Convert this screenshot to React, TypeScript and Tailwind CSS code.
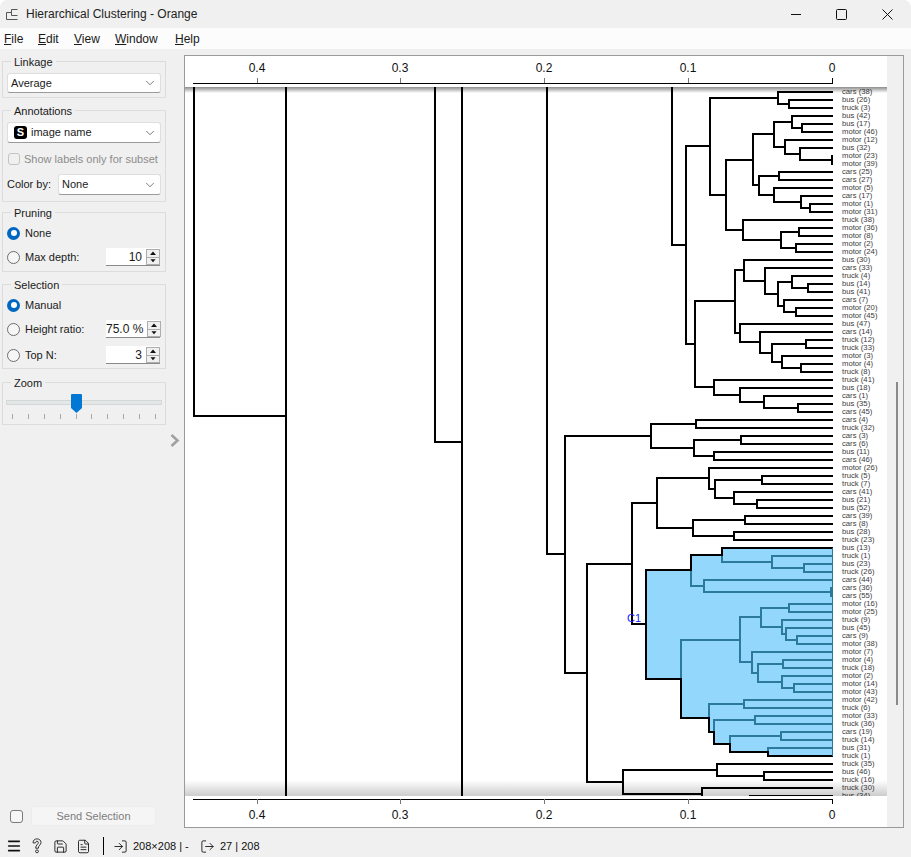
import type { ReactNode } from "react";
import { ChevronDown, LogIn, LogOut, Menu, Save, FileText } from "lucide-react";

type Tree = string | { x: number; a: Tree; b: Tree };
type Laid = { x: number; y: number; a?: Laid; b?: Laid };

const n = (x: number, a: Tree, b: Tree): Tree => ({ x, a, b });

const RIGHT = 833;

const upperTree = n(
  686,
  n(
    710,
    n(778, "cars (38)", n(789, "bus (26)", "truck (3)")),
    n(
      726,
      n(
        753,
        n(
          774,
          n(792, "bus (42)", n(802, "bus (17)", "motor (46)")),
          n(785, "motor (12)", n(800, "bus (32)", n(832, "motor (23)", "motor (39)")))
        ),
        n(
          759,
          n(779, "cars (25)", "cars (27)"),
          n(774, "motor (5)", n(801, "cars (17)", n(810, "motor (1)", "motor (31)")))
        )
      ),
      n(743, "truck (38)", n(781, n(799, "motor (36)", "motor (8)"), n(796, "motor (2)", "motor (24)")))
    )
  ),
  n(
    695,
    n(
      735,
      n(
        744,
        "bus (30)",
        n(
          765,
          "cars (33)",
          n(
            778,
            n(792, "truck (4)", n(808, "bus (14)", "bus (41)")),
            n(784, "cars (7)", n(796, "motor (20)", "motor (45)"))
          )
        )
      ),
      n(
        740,
        "bus (47)",
        n(
          760,
          "cars (14)",
          n(772, n(806, "truck (12)", "truck (33)"), n(782, "motor (3)", n(801, "motor (4)", "truck (8)")))
        )
      )
    ),
    n(714, "truck (41)", n(740, "bus (18)", n(764, "cars (1)", n(798, "bus (35)", "cars (45)"))))
  )
);

const lowerFirst = n(
  651,
  n(696, "cars (4)", "truck (32)"),
  n(694, n(741, "cars (3)", "cars (6)"), n(714, "bus (11)", "cars (46)"))
);

const middle = n(
  657,
  n(
    709,
    "motor (26)",
    n(715, n(762, "truck (5)", "truck (7)"), n(734, "cars (41)", n(757, "bus (21)", "bus (52)")))
  ),
  n(693, n(745, "cars (39)", "cars (8)"), n(734, "bus (28)", "truck (23)"))
);

const selected = n(
  646,
  n(
    691,
    n(722, "bus (13)", n(772, "truck (1)", n(804, "bus (23)", "truck (26)"))),
    n(704, "cars (44)", n(831, "cars (36)", "cars (55)"))
  ),
  n(
    681,
    n(
      740,
      n(
        761,
        n(789, "motor (16)", "motor (25)"),
        n(782, "truck (9)", n(786, "bus (45)", n(797, "cars (9)", "motor (38)")))
      ),
      n(
        752,
        "motor (7)",
        n(758, n(783, "motor (4)", "truck (18)"), n(782, "motor (2)", n(794, "motor (14)", "motor (43)")))
      )
    ),
    n(
      709,
      n(744, "motor (42)", "truck (6)"),
      n(714, n(755, "motor (33)", "truck (36)"), n(730, n(781, "cars (19)", "truck (14)"), n(768, "bus (31)", "truck (1)")))
    )
  )
);

const bottom = n(
  623,
  n(717, "truck (35)", n(764, "bus (46)", "truck (16)")),
  n(702, "truck (30)", n(750, "bus (34)", ""))
);

const labels: string[] = [];
let leafIndex = 0;

function lay(t: Tree): Laid {
  if (typeof t === "string") {
    if (t) labels.push(t);
    return { x: RIGHT, y: 92 + 8 * leafIndex++ };
  }
  const a = lay(t.a);
  const b = lay(t.b);
  return { x: t.x, y: (a.y + b.y) / 2, a, b };
}

// snap to whole pixels so that every 2px line stays 2px wide
const snap = (y: number) => Math.floor(y);

function links(l: Laid): string {
  if (!l.a || !l.b) return "";
  return `M${l.a.x} ${snap(l.a.y)}H${l.x}V${snap(l.b.y)}H${l.b.x}` + links(l.a) + links(l.b);
}

function edge(l: Laid, side: "a" | "b"): [number, number][] {
  const c = l[side];
  if (!c) return [[l.x, snap(l.y)]];
  return [[l.x, snap(l.y)], [l.x, snap(c.y)], ...edge(c, side)];
}

const upperLaid = lay(upperTree);
const firstLaid = lay(lowerFirst);
const middleLaid = lay(middle);
const selectedLaid = lay(selected);
const bottomLaid = lay(bottom);

const hullPoints = [...edge(selectedLaid, "a"), ...edge(selectedLaid, "b").reverse()];
const hullD = "M" + hullPoints.map((p) => p.join(" ")).join("L");

const y632 = (middleLaid.y + selectedLaid.y) / 2;
const y587 = (y632 + bottomLaid.y) / 2;
const y565 = (firstLaid.y + y587) / 2;

const blackLines =
  links(upperLaid) +
  links(firstLaid) +
  links(middleLaid) +
  links(bottomLaid) +
  `M${middleLaid.x} ${snap(middleLaid.y)}H632V${snap(selectedLaid.y)}H646` +
  `M632 ${snap(y632)}H587V${snap(bottomLaid.y)}H623` +
  `M587 ${snap(y587)}H565V${snap(firstLaid.y)}H651` +
  `M565 ${snap(y565)}H547V80` +
  `M435 80V442H462M462 80V830M286 80V830M194 80V416H286` +
  `M672 80V${snap(upperLaid.y)}H686`;

const ticks = [
  { x: 257, label: "0.4" },
  { x: 400, label: "0.3" },
  { x: 544, label: "0.2" },
  { x: 688, label: "0.1" },
  { x: 832, label: "0" },
];

const Axis = ({ flip }: { flip?: boolean }) => (
  <svg
    viewBox={flip ? "185 796 702 31" : "185 56 702 31"}
    className="block h-[31px] w-[702px]"
  >
    <path
      d={flip ? "M193 799.5H833" : "M193 83.5H833"}
      stroke="#000"
      strokeWidth="1.4"
      fill="none"
      shapeRendering="crispEdges"
    />
    {ticks.map((t) => (
      <g key={t.x}>
        <line
          x1={t.x + 0.5}
          x2={t.x + 0.5}
          y1={flip ? 799 : 78}
          y2={flip ? 804 : 83}
          stroke={t.label === "0" ? "#000" : "#777"}
          strokeWidth="1"
        />
        <text x={t.x} y={flip ? 819 : 72} textAnchor="middle" fontSize="12" fill="#111">
          {t.label}
        </text>
      </g>
    ))}
  </svg>
);

const Group = ({ title, className, children }: { title: string; className: string; children: ReactNode }) => (
  <div className={`mx-[2px] border border-[#dcdcdc] ${className}`}>
    <span className="-mt-[7px] ml-[8px] block h-[14px] w-fit bg-[#f0f0f0] px-[3px] leading-[14px]">{title}</span>
    {children}
  </div>
);

const Combo = ({ className, children }: { className: string; children: ReactNode }) => (
  <div
    className={`flex items-center justify-between rounded-[3px] border border-[#dedede] border-b-[#9a9a9a] bg-white pl-[3px] pr-[3px] ${className}`}
  >
    <span className="flex items-center gap-[4px]">{children}</span>
    <ChevronDown size={14} strokeWidth={1.2} className="text-[#444]" />
  </div>
);

const Radio = ({ checked, label, className }: { checked?: boolean; label: string; className?: string }) => (
  <div className={`flex items-center gap-[5px] ${className ?? ""}`}>
    {checked ? (
      <span className="flex h-[13px] w-[13px] items-center justify-center rounded-full bg-[#0067c0]">
        <span className="h-[6px] w-[6px] rounded-full bg-white" />
      </span>
    ) : (
      <span className="h-[13px] w-[13px] rounded-full border border-[#6e6e6e] bg-[#f6f6f6]" />
    )}
    <span>{label}</span>
  </div>
);

const Spin = ({ value }: { value: string }) => (
  <div className="ml-auto mr-[5px] flex h-[18px] w-[54px] items-center border-b border-b-[#8a8a8a] bg-white">
    <span className="flex-1 whitespace-nowrap pr-[4px] text-right text-[12px]">{value}</span>
    <div className="flex h-[16px] w-[14px] flex-col border border-[#adadad] bg-[#f0f0f0]">
      <svg viewBox="0 0 12 7" className="h-[7px] w-[12px]">
        <path d="M6 1.5 9 5H3Z" fill="#111" />
      </svg>
      <span className="h-px bg-[#adadad]" />
      <svg viewBox="0 0 12 7" className="h-[6px] w-[12px]">
        <path d="M3 1.5H9L6 5Z" fill="#111" />
      </svg>
    </div>
  </div>
);

const Slider = () => (
  <div className="relative mx-[4px] mt-[4px] h-[26px]">
    <div className="h-[7px]" />
    <div className="h-[3px] bg-[#e2e7e7] outline outline-1 outline-[#d6d6d6]" />
    <svg viewBox="0 0 11 19" className="absolute left-[64px] top-0 h-[19px] w-[11px]">
      <path d="M1 0H10a1 1 0 0 1 1 1V14L5.5 19 0 14V1a1 1 0 0 1 1-1Z" fill="#0078d4" />
    </svg>
    <div className="mt-[10px] flex h-[5px] justify-between px-[5px]">
      {[0, 1, 2, 3, 4, 5, 6, 7, 8, 9].map((i) => (
        <span key={i} className="w-px bg-[#a8a8a8]" />
      ))}
    </div>
  </div>
);

const MenuItem = ({ first, rest, className }: { first: string; rest: string; className: string }) => (
  <span className={className}>
    <span className="underline">{first}</span>
    {rest}
  </span>
);

export default function App() {
  return (
    <div className="flex h-[857px] w-[911px] flex-col overflow-hidden rounded-t-[8px] bg-[#f0f0f0] font-['Liberation_Sans',sans-serif] text-[11px] text-[#1a1a1a]">
      {/* title bar */}
      <div className="flex h-[28px] items-center bg-[#f0f0f0] text-[12px]">
        <svg viewBox="0 0 12 11" fill="none" stroke="#555" strokeWidth="1" className="ml-[6px] h-[11px] w-[12px]">
          <path d="M11.5 10.5H.5V3.5H5.5V.5H11.5M5.5 3.5V6.5H11.5" />
        </svg>
        <span className="ml-[8px] w-[172px] whitespace-nowrap text-[#222]">Hierarchical Clustering - Orange</span>
        <div className="ml-[593px] flex items-center gap-[35px]">
          <svg viewBox="0 0 10 10" fill="none" stroke="#111" className="h-[10px] w-[10px]">
            <path d="M0 5.5H10" />
          </svg>
          <svg viewBox="0 0 11 11" fill="none" stroke="#111" className="h-[11px] w-[11px]">
            <rect x=".5" y=".5" width="10" height="10" rx="1" />
          </svg>
          <svg viewBox="0 0 11 11" fill="none" stroke="#111" className="h-[11px] w-[11px]">
            <path d="M.5.5 10.5 10.5M10.5.5.5 10.5" />
          </svg>
        </div>
      </div>
      {/* menu bar */}
      <div className="flex h-[21px] items-center bg-[#fcfcfc] pl-[4px] text-[12px]">
        <MenuItem first="F" rest="ile" className="w-[34px]" />
        <MenuItem first="E" rest="dit" className="w-[36px]" />
        <MenuItem first="V" rest="iew" className="w-[41px]" />
        <MenuItem first="W" rest="indow" className="w-[60px]" />
        <MenuItem first="H" rest="elp" className="" />
      </div>
      {/* body */}
      <div className="flex min-h-0 flex-1">
        <div className="flex w-[168px] flex-col">
          <Group title="Linkage" className="mt-[12px] pb-[4px]">
            <Combo className="mx-[4px] mt-[4px] h-[20px]">Average</Combo>
          </Group>
          <Group title="Annotations" className="mt-[12px] pb-[6px]">
            <Combo className="mx-[4px] mt-[4px] h-[21px]">
              <span className="ml-[3px] flex h-[13px] w-[13px] items-center justify-center rounded-[3px] bg-black text-[11px] font-bold text-white">
                S
              </span>
              image name
            </Combo>
            <div className="mt-[8px] flex h-[16px] items-center gap-[4px] whitespace-nowrap pl-[5px] text-[#8c8c8c]">
              <span className="h-[12px] w-[12px] rounded-[3px] border border-[#c4c4c4]" />
              Show labels only for subset
            </div>
            <div className="mt-[7px] flex h-[21px] items-center pl-[4px]">
              <span className="w-[51px]">Color by:</span>
              <Combo className="mr-[4px] h-[21px] flex-1">None</Combo>
            </div>
          </Group>
          <Group title="Pruning" className="mt-[10px] pb-[4px]">
            <Radio checked label="None" className="ml-[4px] mt-[3px] h-[20px]" />
            <div className="mt-[4px] flex h-[20px] items-center">
              <Radio label="Max depth:" className="ml-[4px]" />
              <Spin value="10" />
            </div>
          </Group>
          <Group title="Selection" className="mt-[12px] pb-[3px]">
            <Radio checked label="Manual" className="ml-[4px] mt-[3px] h-[20px]" />
            <div className="mt-[4px] flex h-[20px] items-center">
              <Radio label="Height ratio:" className="ml-[4px]" />
              <Spin value="75.0 %" />
            </div>
            <div className="mt-[6px] flex h-[20px] items-center">
              <Radio label="Top N:" className="ml-[4px]" />
              <Spin value="3" />
            </div>
          </Group>
          <Group title="Zoom" className="mt-[13px] pb-[4px]">
            <Slider />
          </Group>
          <div className="mb-[9px] mt-auto flex h-[20px] items-center pl-[10px]">
            <span className="h-[13px] w-[13px] rounded-[3px] border border-[#7a7a7a] bg-[#f6f6f6]" />
            <button className="ml-[8px] h-[20px] w-[125px] rounded-[3px] border border-[#ececec] bg-[#f5f5f5] text-[#7d7d7d]">
              Send Selection
            </button>
          </div>
        </div>
        <div className="w-[16px] pl-[2px] pt-[385px]">
          <svg viewBox="0 0 10 13" className="h-[13px] w-[10px]" fill="none" stroke="#a0a0a0" strokeWidth="2.6">
            <path d="M1.5 1 7.5 6.5 1.5 12" />
          </svg>
        </div>
        {/* plot frame */}
        <div className="mb-[7px] mt-[6px] flex w-[720px] border border-[#9a9a9a] bg-[#f0f0f0]">
          <div className="flex w-[702px] flex-col bg-white">
            <Axis />
            <div className="relative flex min-h-0 flex-1 overflow-hidden">
              <svg viewBox="185 87 648 709" className="block h-[709px] w-[648px] shrink-0">
                <path d={blackLines} fill="none" stroke="#000" strokeWidth="2" shapeRendering="crispEdges" />
                <path d={hullD + "Z"} fill="#93d7fc" stroke="none" />
                <path d={links(selectedLaid)} fill="none" stroke="#2b7a9e" strokeWidth="2" shapeRendering="crispEdges" />
                <path d={hullD} fill="none" stroke="#000" strokeWidth="2" shapeRendering="crispEdges" />
                <path d="M833 548V756" fill="none" stroke="#2b7a9e" strokeWidth="2" shapeRendering="crispEdges" />
                <text x="627" y="622" fontSize="11" fill="#1a1aff">
                  C1
                </text>
              </svg>
              <div className="ml-[9px] pt-px text-[7.7px] leading-[8px] text-[#3c3c3c]">
                {labels.map((l, i) => (
                  <div key={i} className="h-[8px] whitespace-nowrap">
                    {l}
                  </div>
                ))}
              </div>
              <div className="absolute inset-x-0 top-0 h-[6px] bg-linear-to-b from-black/45 to-transparent" />
              <div className="absolute inset-x-0 bottom-0 h-[16px] bg-linear-to-t from-black/20 to-transparent" />
            </div>
            <Axis flip />
          </div>
          <div className="w-[17px] pl-[9px] pt-[326px]">
            <div className="h-[323px] w-[2px] bg-[#8a8a8a]" />
          </div>
        </div>
      </div>
      {/* status bar */}
      <div className="flex h-[22px] items-center text-[#111]">
        <Menu size={16} strokeWidth={2.4} className="ml-[6px]" />
        <svg viewBox="0 0 12 18" fill="none" stroke="#333" strokeWidth="1.1" className="ml-[9px] h-[16px] w-[12px]">
          <path d="M1.5 5.5C1.5 2.5 3.5 1 6 1s4.5 1.5 4.5 4.2c0 2.4-3 3-3 6.3H4.5c0-4 3-4.2 3-6.3C7.5 4.2 7 3.6 6 3.6S4.5 4.3 4.5 5.5Z" />
          <circle cx="6" cy="15" r="1.6" />
        </svg>
        <Save size={15} strokeWidth={1.4} className="ml-[10px]" />
        <FileText size={15} strokeWidth={1.4} className="ml-[8px]" />
        <span className="ml-[12px] h-[18px] w-px bg-black" />
        <LogIn size={15} strokeWidth={1.4} className="ml-[9px]" />
        <span className="ml-[5px] w-[67px]">208×208 | -</span>
        <LogOut size={15} strokeWidth={1.4} />
        <span className="ml-[5px]">27 | 208</span>
      </div>
    </div>
  );
}
